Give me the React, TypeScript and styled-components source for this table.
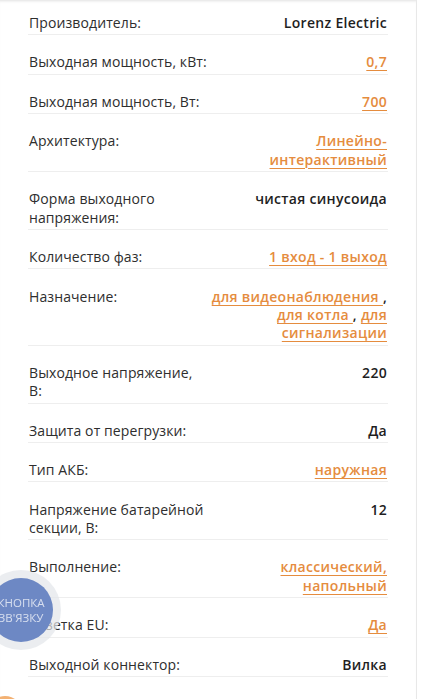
import React from "react";
import styled, { createGlobalStyle } from "styled-components";

const Global = createGlobalStyle`
  html, body { margin: 0; padding: 0; background: #ffffff; }
  body { font-family: "Open Sans", "Noto Sans", sans-serif; }
`;

const Card = styled.div`
  width: 417px;
  min-height: 699px;
  box-sizing: border-box;
  border-right: 1px solid #e8e8e8;
  box-shadow: inset 0 3px 3px -2px rgba(0, 0, 0, 0.12);
  padding: 0 0 0 28px;
`;

const List = styled.dl`
  margin: 0;
  width: 360px;
`;

const Row = styled.div<{ $first?: boolean }>`
  display: grid;
  grid-template-columns: 180px 1fr;
  padding: ${(p) => (p.$first ? "14px" : "18.1px")} 0 2px 1px;
  border-bottom: 1px solid #eeeeee;
  font-size: 14px;
  line-height: 18.375px;
  letter-spacing: 0.1px;
`;

const Label = styled.dt`
  margin: 0;
  color: #2e2e2e;
  font-weight: 400;
`;

const Value = styled.dd`
  margin: 0;
  padding-right: 1px;
  text-align: right;
  color: #1f1f1f;
  font-weight: 600;
  letter-spacing: 0.3px;
`;

const Link = styled.a`
  color: #e58c3e;
  text-decoration: underline;
  text-decoration-thickness: 1px;
  text-underline-offset: 3px;
  cursor: pointer;
`;

const Floating = styled.button`
  position: fixed;
  left: -11px;
  top: 578px;
  width: 64px;
  height: 64px;
  border: none;
  border-radius: 50%;
  background: #6d88c4;
  box-shadow: 0 0 0 8px rgba(226, 229, 234, 0.7);
  color: rgba(255, 255, 255, 0.72);
  font-family: "Open Sans", sans-serif;
  font-size: 11.5px;
  line-height: 15px;
  text-transform: uppercase;
  padding: 0;
  display: flex;
  align-items: center;
  justify-content: center;
  text-align: center;
  letter-spacing: 0;
`;

const OrangeDot = styled.div`
  position: fixed;
  left: -12px;
  top: 696px;
  width: 34px;
  height: 34px;
  border-radius: 50%;
  background: #f3b173;
`;

type Part = { text: string; link?: boolean };
type Spec = { label: string; value: Part[] };

const specs: Spec[] = [
  { label: "Производитель:", value: [{ text: "Lorenz Electric" }] },
  { label: "Выходная мощность, кВт:", value: [{ text: "0,7", link: true }] },
  { label: "Выходная мощность, Вт:", value: [{ text: "700", link: true }] },
  { label: "Архитектура:", value: [{ text: "Линейно-интерактивный", link: true }] },
  { label: "Форма выходного напряжения:", value: [{ text: "чистая синусоида" }] },
  { label: "Количество фаз:", value: [{ text: "1 вход - 1 выход", link: true }] },
  {
    label: "Назначение:",
    value: [
      { text: "для видеонаблюдения ", link: true },
      { text: ", " },
      { text: "для котла ", link: true },
      { text: ", " },
      { text: "для сигнализации", link: true },
    ],
  },
  { label: "Выходное напряжение, В:", value: [{ text: "220" }] },
  { label: "Защита от перегрузки:", value: [{ text: "Да" }] },
  { label: "Тип АКБ:", value: [{ text: "наружная", link: true }] },
  { label: "Напряжение батарейной секции, В:", value: [{ text: "12" }] },
  { label: "Выполнение:", value: [{ text: "классический, напольный", link: true }] },
  { label: "Розетка EU:", value: [{ text: "Да", link: true }] },
  { label: "Выходной коннектор:", value: [{ text: "Вилка" }] },
];

export default function App() {
  return (
    <>
      <Global />
      <Card>
        <List>
          {specs.map((s, i) => (
            <Row key={s.label} $first={i === 0}>
              <Label>{s.label}</Label>
              <Value>
                {s.value.map((p, j) =>
                  p.link ? <Link key={j}>{p.text}</Link> : <React.Fragment key={j}>{p.text}</React.Fragment>
                )}
              </Value>
            </Row>
          ))}
        </List>
      </Card>
      <Floating>
        КНОПКА
        <br />
        ЗВ'ЯЗКУ
      </Floating>
      <OrangeDot />
    </>
  );
}
